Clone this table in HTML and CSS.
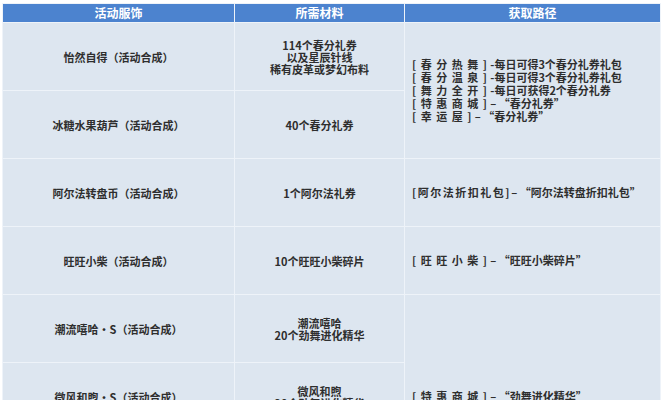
FILE: index.html
```html
<!DOCTYPE html>
<html lang="zh">
<head>
<meta charset="utf-8">
<link rel="stylesheet" href="styles.css">
</head>
<body>
<table class="grid">
  <colgroup>
    <col class="c1"><col class="c2"><col class="c3">
  </colgroup>
  <thead>
    <tr class="head"><th>活动服饰</th><th>所需材料</th><th>获取路径</th></tr>
  </thead>
  <tbody>
    <tr>
      <td class="name">怡然自得（活动合成）</td>
      <td class="mat">114个春分礼券<br>以及星辰针线<br>稀有皮革或梦幻布料</td>
      <td class="path" rowspan="2">
        <div><span class="tag">[ 春 分 热 舞 ]</span> -每日可得3个春分礼券礼包</div>
        <div><span class="tag">[ 春 分 温 泉 ]</span> -每日可得3个春分礼券礼包</div>
        <div><span class="tag">[ 舞 力 全 开 ]</span> -每日可获得2个春分礼券</div>
        <div><span class="tag">[ 特 惠 商 城 ]</span> – “春分礼券”</div>
        <div><span class="tag">[ 幸 运 屋 ]</span> – “春分礼券”</div>
      </td>
    </tr>
    <tr>
      <td class="name">冰糖水果葫芦（活动合成）</td>
      <td class="mat">40个春分礼券</td>
    </tr>
    <tr>
      <td class="name">阿尔法转盘币（活动合成）</td>
      <td class="mat">1个阿尔法礼券</td>
      <td class="path"><div><span class="tag tag-long">[ 阿 尔 法 折 扣 礼 包 ]</span> – “阿尔法转盘折扣礼包”</div></td>
    </tr>
    <tr>
      <td class="name">旺旺小柴（活动合成）</td>
      <td class="mat">10个旺旺小柴碎片</td>
      <td class="path"><div><span class="tag">[ 旺 旺 小 柴 ]</span> – “旺旺小柴碎片”</div></td>
    </tr>
    <tr>
      <td class="name">潮流嘻哈・S（活动合成）</td>
      <td class="mat">潮流嘻哈<br>20个劲舞进化精华</td>
      <td class="path" rowspan="3"><div><span class="tag">[ 特 惠 商 城 ]</span> – “劲舞进化精华”</div></td>
    </tr>
    <tr>
      <td class="name">微风和煦・S（活动合成）</td>
      <td class="mat">微风和煦<br>20个劲舞进化精华</td>
    </tr>
    <tr>
      <td class="name"></td>
      <td class="mat"></td>
    </tr>
  </tbody>
</table>
</body>
</html>
```
FILE: styles.css
```css
html, body {
  margin: 0;
  padding: 0;
  background: #ffffff;
}
body {
  padding: 3px 0 0 2px;
  font-family: "Noto Sans CJK SC", "Noto Sans", sans-serif;
  font-weight: 700;
  color: #2e2e2e;
}
.grid {
  border-collapse: collapse;
  table-layout: fixed;
  width: 658px;
}
.c1 { width: 232px; }
.c2 { width: 170px; }
.c3 { width: 256px; }
.grid th, .grid td {
  border: 1px solid #eef3f9;
  padding: 0;
}
.head th {
  background: #4c83cf;
  color: #ffffff;
  font-size: 12px;
  line-height: 14px;
  height: 18px;
  text-align: center;
  vertical-align: middle;
}
.grid td {
  background: #dde6f0;
  font-size: 11px;
  line-height: 12px;
  height: 67px;
  vertical-align: middle;
}
.name, .mat {
  text-align: center;
}
.path {
  text-align: left;
  padding-left: 7px !important;
  line-height: 13px !important;
  white-space: nowrap;
}
.tag {
  letter-spacing: 1px;
}
.tag-long {
  letter-spacing: -0.5px;
}
```
